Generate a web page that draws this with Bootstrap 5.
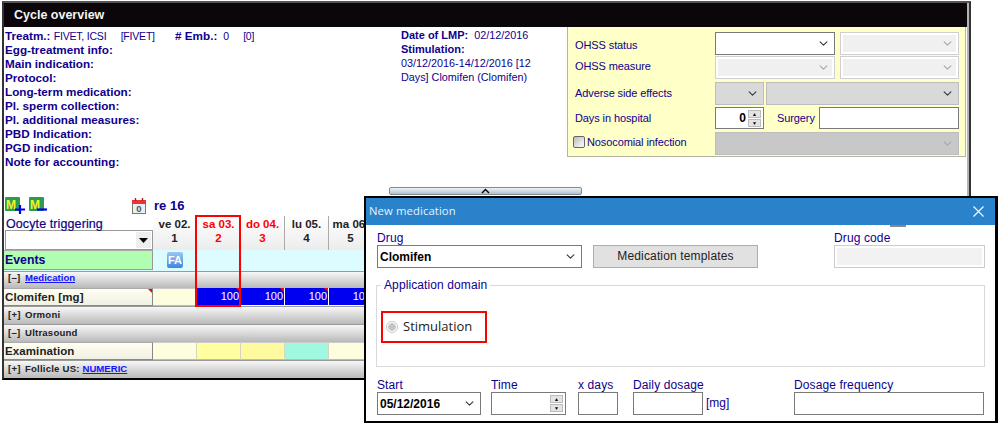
<!DOCTYPE html>
<html lang="en">
<head>
  <meta charset="UTF-8" />
  <title>Cycle overview</title>
  <link href="https://cdn.jsdelivr.net/npm/bootstrap@5.3.0/dist/css/bootstrap.min.css" rel="stylesheet"/>
  <style>
    html, body { height: 423px; overflow: hidden; }
    body { background: #fff; position: relative; font-family: "Liberation Sans", Arial, sans-serif; font-size: 12px; color: #10008c; }

    /* main window */
    .win-frame { margin: 1px 0 0 2px; box-sizing: content-box; width: 963px; height: 375px; padding-right: 2px; border-top: 2px solid #555; border-left: 2px solid #333; border-right: 2px solid #333; border-bottom: 2px solid #000; box-shadow: inset -2px 0 0 #b4b4b4; overflow: hidden; }
    .win-head { height: 24px; background: #0a0609; color: #f4f4f4; font-weight: 700; font-size: 12.5px; padding-left: 10px; line-height: 24px; }
    .top-area { height: 160px; }
    .info-col { width: 397px; padding: 2px 0 0 1px; font-weight: 700; font-size: 11.7px; line-height: 14px; }
    .info-val { font-weight: 400; font-size: 10.5px; letter-spacing: -.2px; }
    .gap-a { margin-left: 11px; }
    .gap-b { margin-left: 17px; }
    .mid-col { width: 166px; padding-top: 1px; font-size: 10.8px; line-height: 14px; }
    .mid-col b { font-size: 11px; }

    /* yellow OHSS panel */
    .ohss-panel { width: 399px; height: 130px; background: #ffffc8; border: 1px solid #b4b4a0; border-top: 0; padding: 5px 6px 0 7px; font-size: 11px; letter-spacing: -.1px; }
    .ohss-row { display: flex; align-items: center; }
    .ohss-row + .ohss-row { margin-top: 1px; }
    .ohss-label { width: 140px; flex: none; }
    .lbl-down { padding-top: 3px; }
    .lbl-up { padding-bottom: 3px; }
    .mt-gap2 { margin-top: 2px !important; }
    .mt-gap3 { margin-top: 3px !important; }

    .form-select.win-select, .form-control.win-input { border-radius: 0; border: 1px solid #7a7a7a; padding: 0 2px; font-size: 12px; min-height: 0; line-height: 1; color: #000; box-shadow: none; }
    .form-select.win-select { background-position: right 5px center; background-size: 11px 9px; }
    .form-select.sel-off { border-color: #d0d0d0; background-color: #f0f0f0; box-shadow: inset 0 0 0 2px #fff; opacity: 1; }
    .form-select.sel-grey { border-color: #bdbdbd; background-color: #d9d9d9; opacity: 1; }
    .form-select.sel-dark { border-color: #bdbdbd; background-color: #c8c8c8; opacity: 1; }
    .form-select.sel-off, .form-select.sel-dark { background-image: url("data:image/svg+xml,%3csvg xmlns='http://www.w3.org/2000/svg' viewBox='0 0 16 16'%3e%3cpath fill='none' stroke='%23a8a8a8' stroke-linecap='round' stroke-linejoin='round' stroke-width='2' d='m2 5 6 6 6-6'/%3e%3c/svg%3e"); }
    .w-120 { width: 120px; } .w-119 { width: 119px; } .w-49 { width: 49px; } .w-193 { width: 193px; } .w-245 { width: 245px; } .w-140 { width: 140px; }
    .h-22 { height: 22px; } .h-23 { height: 23px; }
    .surgery-label { margin-left: 13px; }
    .spin-box { display: flex; border: 1px solid #7a7a7a; background: #fff; }
    .spin-box input { border: 0; outline: 0; width: 100%; min-width: 0; background: transparent; text-align: right; font-weight: 700; font-size: 12px; padding: 0; color: #000; }
    .spin-arrows { width: 17px; flex: none; display: flex; flex-direction: column; justify-content: center; gap: 1px; padding: 0 2px; }
    .spin-arrows span { display: block; height: 8px; background: #e4e4e4; border: 1px solid #bbb; color: #000; font-size: 5px; line-height: 6px; text-align: center; }
    .check-box.form-check-input { width: 12px; height: 12px; margin: 0 2px 0 -2px; border-radius: 2px; border-color: #666; background: linear-gradient(135deg, #bbb, #fff); flex: none; }

    .splitter { width: 193px; height: 8px; margin: 0 0 1px 385px; border: 1px solid #888; border-radius: 2px; background: linear-gradient(#eef2f5, #a9c3d6); display: flex; justify-content: center; }

    /* planning grid */
    .tool-row { height: 20px; }
    .tool-left { width: 149px; padding-left: 1px; }
    .icon-cal { margin-right: 7px; margin-left: auto; }
    .tool-title { font-weight: 700; font-size: 13px; padding-left: 1px; }
    .plan-grid { position: relative; }
    .grid-line { display: flex; }
    .line-label { width: 149px; flex: none; }
    .day-cell { width: 44px; flex: none; }
    .line-head { height: 34px; }
    .oocyte-label { font-size: 12.5px; line-height: 14px; padding: 1px 0 0 2px; height: 14px; letter-spacing: .1px; -webkit-text-stroke: .2px #10008c; }
    .oocyte-combo { height: 20px; margin: 0 0 0 1px; border: 1px solid #999; display: flex; justify-content: flex-end; padding: 1px; }
    .combo-arrow { width: 15px; background: #eee; display: flex; align-items: center; justify-content: center; }
    .day-head { background: linear-gradient(#fff, #ececec); border-right: 1px solid #aaa; text-align: center; font-weight: 700; color: #222; font-size: 11.5px; line-height: 14px; padding-top: 1px; }
    .day-red { color: #f00; }
    .line-events { height: 21px; margin-bottom: 0; background: #dcfcff; }
    .label-events { background: #b0ffb0; color: #10008c; font-size: 12.3px; font-weight: 700; line-height: 18px; padding-left: 1px; border-top: 1px solid #aaa; border-bottom: 1px solid #999; border-right: 1px solid #999; height: 20px; }
    .fa-badge { width: 16px; height: 16px; margin: 2px auto 0; border-radius: 2px; background: linear-gradient(#9cc6f5, #3f86e0); color: #fff; font-weight: 700; font-size: 11px; line-height: 16px; text-align: center; }
    .line-section { background: linear-gradient(#f7f7f7, #b9b9b9); color: #222; font-weight: 700; font-size: 9.6px; letter-spacing: .2px; padding: 0 0 1px 4px; border-top: 1px solid #9a9a9a; align-items: center; }
    .section-17 { height: 17px; padding-bottom: 4px; } .section-18 { height: 18px; }
    .sec-mark { width: 17px; flex: none; }
    .line-section a { color: #1414ff; letter-spacing: 0; }
    .line-data { height: 18px; }
    .label-data { background: linear-gradient(#fffef0, #f0f0e4); border-top: 1px solid #aaa; border-bottom: 1px solid #888; border-right: 1px solid #888; color: #222; font-weight: 700; font-size: 11.5px; line-height: 16px; padding-left: 1px; letter-spacing: .1px; position: relative; }
    .label-flag::after, .cell-flag::after { content: ""; position: absolute; top: 0; right: 0; border-top: 4px solid #f00; border-left: 4px solid transparent; }
    .cell-cream { background: #fffde0; }
    .cell-sun { background: #ffff9f; }
    .cell-lemon { background: #fffaa0; }
    .cell-mint { background: #a0f8e0; }
    .cell-dose { background: #0000f0; color: #fff; font-size: 11px; line-height: 16px; text-align: right; padding-right: 1px; border-right: 1px solid #fff; border-bottom: 1px solid #fff; position: relative; }
    .cell-plain { border-right: 1px solid #d5d5c0; border-bottom: 1px solid #bbb; border-top: 1px solid #ccc; }
    .today-box { position: absolute; left: 191px; top: -1px; width: 46px; height: 92px; border: 2px solid #f00; pointer-events: none; }

    /* dialog */
    .med-dialog { position: absolute; left: 364px; top: 196px; width: 634px; height: 227px; background: #fff; border: 2px solid #000; border-radius: 0; border-right-width: 3px; display: block; font-size: 12px; }
    .med-title { height: 27px; background: #2a82cb; color: #e8f2fb; font-size: 11.3px; letter-spacing: .1px; padding: 0 11px 0 3px; font-family: "Open Sans", sans-serif; }
    .title-tab { position: absolute; left: 524px; top: 27px; width: 16px; height: 2px; background: #888; }
    .med-body { padding: 6px 0 0 11px; }
    .med-label { line-height: 14px; letter-spacing: .12px; }
    .col-drug { width: 205px; }
    .col-btn { width: 165px; margin-left: 11px; padding-top: 14px; }
    .col-code { width: 151px; margin-left: 76px; }
    .form-select.drug-sel { height: 23px; font-weight: 700; font-size: 12px; }
    .btn.templ-btn { width: 100%; height: 23px; padding: 0; border-radius: 0; background: #e1e1e1; border: 1px solid #adadad; color: #222; font-size: 12px; letter-spacing: .15px; line-height: 21px; }
    .form-control.code-input { height: 23px; border-color: #ccc; background: #f2f2f2; box-shadow: inset 0 0 0 2px #fff; opacity: 1; }
    .app-domain { width: 609px; height: 89px; margin: 10px 0 0 -1px; border: 1px solid #d9d9d9; padding: 0 0 0 4px; min-width: 0; }
    .app-domain legend { float: none; width: auto; margin: 0; padding: 0 3px; font-size: 12px; line-height: 14px; letter-spacing: .1px; color: #10008c; }
    .stim-box { width: 106px; height: 32px; margin-top: 19px; border: 2px solid #f00; padding-left: 3px; color: #222; font-family: "Open Sans", sans-serif; font-size: 13px; gap: 5px; }
    .form-check-input.stim-radio { width: 12px; height: 12px; margin: 0; border-color: #c4c4c4; background-color: #fff; background-image: radial-gradient(circle, #c4c4c4 3.5px, transparent 4px); opacity: 1; flex: none; }
    .bottom-fields { margin-top: 11px; }
    .col-start { width: 104px; } .col-time { width: 75px; margin-left: 10px; } .col-days { width: 40px; margin-left: 12px; }
    .col-dose { width: 70px; margin-left: 15px; } .col-unit { width: 91px; padding: 14px 0 0 3px; line-height: 22px; } .col-freq { width: 190px; }
    .form-control.plain-input { height: 23px; border-color: #7a7a7a; }
    .med-label-wide { white-space: nowrap; }
  </style>
</head>
<body>
  <div class="win-frame">
    <div class="win-head">Cycle overview</div>

    <div class="top-area d-flex">
      <div class="info-col">
        <div>Treatm.: <span class="info-val">FIVET, ICSI</span> <span class="info-val gap-a">[FIVET]</span> <span class="gap-b">#&nbsp;Emb.:</span> <span class="info-val">&nbsp;0</span> <span class="info-val gap-a">[0]</span></div>
        <div>Egg-treatment info:</div>
        <div>Main indication:</div>
        <div>Protocol:</div>
        <div>Long-term medication:</div>
        <div>Pl. sperm collection:</div>
        <div>Pl. additional measures:</div>
        <div>PBD Indication:</div>
        <div>PGD indication:</div>
        <div>Note for accounting:</div>
      </div>
      <div class="mid-col">
        <div><b>Date of LMP:</b>&nbsp; 02/12/2016</div>
        <div><b>Stimulation:</b></div>
        <div>03/12/2016-14/12/2016 [12<br>Days] Clomifen (Clomifen)</div>
      </div>
      <div class="ohss-panel">
        <div class="ohss-row">
          <div class="ohss-label lbl-down">OHSS status</div>
          <select class="form-select win-select w-120 h-23"><option></option></select>
          <select class="form-select win-select sel-off w-119 h-23 ms-auto" disabled><option></option></select>
        </div>
        <div class="ohss-row">
          <div class="ohss-label lbl-up">OHSS measure</div>
          <select class="form-select win-select sel-off w-120 h-23" disabled><option></option></select>
          <select class="form-select win-select sel-off w-119 h-23 ms-auto" disabled><option></option></select>
        </div>
        <div class="ohss-row mt-gap3">
          <div class="ohss-label">Adverse side effects</div>
          <select class="form-select win-select sel-grey w-49 h-23"><option></option></select>
          <select class="form-select win-select sel-grey w-193 h-23 ms-auto"><option></option></select>
        </div>
        <div class="ohss-row mt-gap2">
          <div class="ohss-label">Days in hospital</div>
          <div class="spin-box w-49 h-22">
            <input type="text" value="0">
            <div class="spin-arrows"><span>▲</span><span>▼</span></div>
          </div>
          <div class="surgery-label">Surgery</div>
          <input class="form-control win-input w-140 h-22 ms-auto" type="text">
        </div>
        <div class="ohss-row mt-gap3">
          <div class="ohss-label lbl-up d-flex align-items-center"><input class="form-check-input check-box" type="checkbox"> Nosocomial infection</div>
          <select class="form-select win-select sel-dark w-245 h-23" disabled><option></option></select>
        </div>
      </div>
    </div>

    <div class="splitter">
      <svg width="9" height="6" viewBox="0 0 9 6"><path d="M1 5 L4.5 1.5 L8 5" fill="none" stroke="#000" stroke-width="1.4"/></svg>
    </div>

    <div class="tool-row d-flex align-items-center">
      <div class="tool-left d-flex align-items-center">
        <svg width="24" height="18" viewBox="0 0 24 18"><rect x="0" y="0" width="15" height="14" rx="1" fill="#2a9d55"/><text x="1" y="11.5" font-family="Liberation Sans" font-weight="700" font-size="12" fill="#f2f22a">M</text><path d="M10 12.5h10M15 8v9" stroke="#0000f0" stroke-width="2.2"/></svg>
        <svg width="20" height="18" viewBox="0 0 20 18"><rect x="0" y="0" width="15" height="14" rx="1" fill="#2a9d55"/><text x="1" y="11.5" font-family="Liberation Sans" font-weight="700" font-size="12" fill="#f2f22a">M</text><path d="M8 12.5h10" stroke="#0000f0" stroke-width="2.2"/></svg>
        <svg class="icon-cal" width="14" height="16" viewBox="0 0 14 16"><rect x=".5" y="2.5" width="13" height="13" fill="#eee" stroke="#777"/><rect x="0" y="2" width="14" height="4" fill="#e33"/><path d="M3.5 0v3M10.5 0v3" stroke="#a22" stroke-width="1.4"/><text x="7" y="14" text-anchor="middle" font-family="Liberation Sans" font-weight="700" font-size="9.5" fill="#456">0</text></svg>
      </div>
      <div class="tool-title">re 16</div>
    </div>

    <div class="plan-grid">
      <div class="grid-line line-head">
        <div class="line-label">
          <div class="oocyte-label">Oocyte triggering</div>
          <div class="oocyte-combo"><span class="combo-arrow"><svg width="9" height="5" viewBox="0 0 9 5"><path d="M0 0h9L4.5 5z" fill="#000"/></svg></span></div>
        </div>
        <div class="day-cell day-head">ve 02.<br>1</div>
        <div class="day-cell day-head day-red">sa 03.<br>2</div>
        <div class="day-cell day-head day-red">do 04.<br>3</div>
        <div class="day-cell day-head">lu 05.<br>4</div>
        <div class="day-cell day-head">ma 06.<br>5</div>
      </div>

      <div class="grid-line line-events">
        <div class="line-label label-events">Events</div>
        <div class="day-cell"><div class="fa-badge">FA</div></div>
      </div>

      <div class="grid-line line-section section-17">
        <span class="sec-mark">[–]</span><a href="#">Medication</a>
      </div>

      <div class="grid-line line-data">
        <div class="line-label label-data label-flag">Clomifen [mg]</div>
        <div class="day-cell cell-cream cell-plain"></div>
        <div class="day-cell cell-dose cell-flag">100</div>
        <div class="day-cell cell-dose cell-flag">100</div>
        <div class="day-cell cell-dose cell-flag">100</div>
        <div class="day-cell cell-dose cell-flag">100</div>
      </div>

      <div class="grid-line line-section section-18">
        <span class="sec-mark">[+]</span>Ormoni
      </div>
      <div class="grid-line line-section section-18">
        <span class="sec-mark">[–]</span>Ultrasound
      </div>

      <div class="grid-line line-data">
        <div class="line-label label-data">Examination</div>
        <div class="day-cell cell-cream cell-plain"></div>
        <div class="day-cell cell-sun cell-plain"></div>
        <div class="day-cell cell-lemon cell-plain"></div>
        <div class="day-cell cell-mint cell-plain"></div>
        <div class="day-cell cell-cream cell-plain"></div>
      </div>

      <div class="grid-line line-section section-18">
        <span class="sec-mark">[+]</span>Follicle US:&nbsp;<a href="#">NUMERIC</a>
      </div>

      <div class="today-box"></div>
    </div>
  </div>

  <div class="med-dialog modal-content">
    <div class="med-title d-flex align-items-center justify-content-between">
      <span>New medication</span>
      <svg width="11" height="11" viewBox="0 0 11 11"><path d="M.5 .5l10 10M10.5 .5l-10 10" stroke="#fff" stroke-width="1.1"/></svg>
    </div>
    <div class="title-tab"></div>
    <div class="med-body">
      <div class="d-flex">
        <div class="col-drug">
          <div class="med-label">Drug</div>
          <select class="form-select win-select drug-sel"><option>Clomifen</option></select>
        </div>
        <div class="col-btn"><button type="button" class="btn templ-btn">Medication templates</button></div>
        <div class="col-code">
          <div class="med-label">Drug code</div>
          <input class="form-control win-input code-input" type="text" disabled>
        </div>
      </div>

      <fieldset class="app-domain">
        <legend>Application domain</legend>
        <div class="stim-box d-flex align-items-center">
          <input class="form-check-input stim-radio" type="radio" checked disabled>
          <span>Stimulation</span>
        </div>
      </fieldset>

      <div class="bottom-fields d-flex">
        <div class="col-start">
          <div class="med-label">Start</div>
          <select class="form-select win-select drug-sel"><option>05/12/2016</option></select>
        </div>
        <div class="col-time">
          <div class="med-label">Time</div>
          <div class="spin-box h-23">
            <input type="text">
            <div class="spin-arrows"><span>▲</span><span>▼</span></div>
          </div>
        </div>
        <div class="col-days">
          <div class="med-label">x days</div>
          <input class="form-control win-input plain-input" type="text">
        </div>
        <div class="col-dose">
          <div class="med-label med-label-wide">Daily dosage</div>
          <input class="form-control win-input plain-input" type="text">
        </div>
        <div class="col-unit">[mg]</div>
        <div class="col-freq">
          <div class="med-label">Dosage frequency</div>
          <input class="form-control win-input plain-input" type="text">
        </div>
      </div>
    </div>
  </div>

  <script src="https://cdn.jsdelivr.net/npm/bootstrap@5.3.0/dist/js/bootstrap.bundle.min.js"></script>
</body>
</html>
